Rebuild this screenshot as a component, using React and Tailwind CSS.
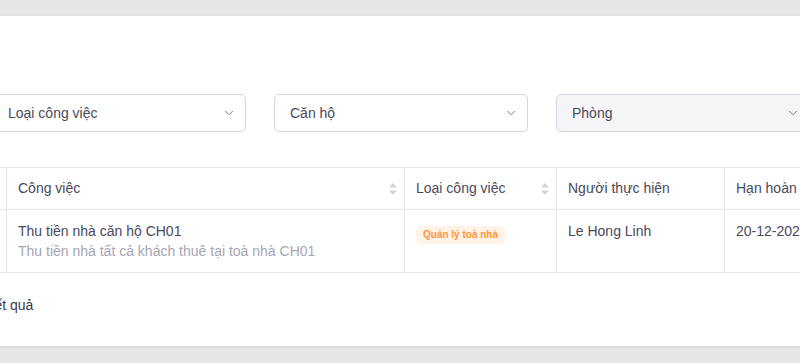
import { ChevronDown } from 'lucide-react';

const font = { fontFamily: '"Liberation Sans", Arial, sans-serif' };

function Select({ label, disabled }) {
  return (
    <div
      className={`w-[254px] h-[38px] shrink-0 flex items-center justify-between pl-[15px] pr-[9px] rounded-[5px] border border-[#d6d5de] ${disabled ? 'bg-[#f5f5f7]' : 'bg-white'}`}
    >
      <span className="text-[14px] text-[#4a4a5a]">{label}</span>
      <ChevronDown size={14} strokeWidth={1.6} className="text-[#6f6f7f]" />
    </div>
  );
}

function SortIcon() {
  return (
    <svg width="10" height="14" viewBox="0 0 10 14" className="text-[#d4d4dc] shrink-0" fill="currentColor">
      <path d="M5 1 L9 5.5 H1 Z" />
      <path d="M5 13 L9 8.5 H1 Z" />
    </svg>
  );
}

export default function App() {
  return (
    <div className="w-[800px] h-[363px] overflow-hidden bg-[#e6e6e6] pt-[16px]" style={font}>
      <div className="bg-white h-[330px] -ml-[20px] w-[840px] shadow-[0_1px_3px_rgba(0,0,0,0.08)]">
        <div className="pt-[78px] pl-[12px] flex gap-[28px]">
          <Select label="Loại công việc" />
          <Select label="Căn hộ" />
          <Select label="Phòng" disabled />
        </div>

        <div className="mt-[35px] border-y border-[#e6e6ee] flex flex-col">
          <div className="flex h-[42px] border-b border-[#e6e6ee] text-[14px] text-[#4a4a5a]">
            <div className="w-[27px] shrink-0 border-r border-[#e6e6ee]" />
            <div className="w-[398px] shrink-0 border-r border-[#e6e6ee] flex items-center justify-between pl-[11px] pr-[6px]">
              <span>Công việc</span>
              <SortIcon />
            </div>
            <div className="w-[152px] shrink-0 border-r border-[#e6e6ee] flex items-center justify-between pl-[11px] pr-[6px]">
              <span>Loại công việc</span>
              <SortIcon />
            </div>
            <div className="w-[168px] shrink-0 border-r border-[#e6e6ee] flex items-center pl-[11px]">
              <span>Người thực hiện</span>
            </div>
            <div className="flex-1 min-w-0 flex items-center pl-[11px] whitespace-nowrap overflow-hidden">
              <span>Hạn hoàn thành</span>
            </div>
          </div>
          <div className="flex h-[62px] text-[14px] text-[#4a4a5a]">
            <div className="w-[27px] shrink-0 border-r border-[#e6e6ee]" />
            <div className="w-[398px] shrink-0 border-r border-[#e6e6ee] pl-[11px] pt-[11px] leading-[20px]">
              <div>Thu tiền nhà căn hộ CH01</div>
              <div className="text-[#a6a6b4]">Thu tiền nhà tất cả khách thuê tại toà nhà CH01</div>
            </div>
            <div className="w-[152px] shrink-0 border-r border-[#e6e6ee] pl-[11px] pt-[13px]">
              <span className="inline-flex items-center h-[18px] px-[7px] rounded-[5px] bg-[#fff2e7] text-[#ff9636] text-[10px] font-bold">
                Quản lý toà nhà
              </span>
            </div>
            <div className="w-[168px] shrink-0 border-r border-[#e6e6ee] pl-[11px] pt-[11px] leading-[20px]">
              Le Hong Linh
            </div>
            <div className="flex-1 min-w-0 pl-[11px] pt-[11px] leading-[20px] whitespace-nowrap overflow-hidden">20-12-2023</div>
          </div>
        </div>

        <div className="pt-[22px] -ml-[26px] text-[14px] text-[#3a3a4a] whitespace-nowrap">Có 1 kết quả</div>
      </div>
    </div>
  );
}
